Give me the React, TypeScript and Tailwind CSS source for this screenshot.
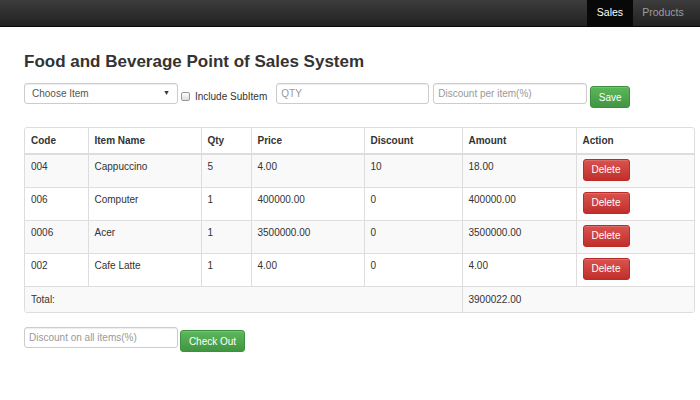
import React from 'react';

const rows = [
  { code: '004', name: 'Cappuccino', qty: '5', price: '4.00', discount: '10', amount: '18.00' },
  { code: '006', name: 'Computer', qty: '1', price: '400000.00', discount: '0', amount: '400000.00' },
  { code: '0006', name: 'Acer', qty: '1', price: '3500000.00', discount: '0', amount: '3500000.00' },
  { code: '002', name: 'Cafe Latte', qty: '1', price: '4.00', discount: '0', amount: '4.00' },
];

function DeleteButton() {
  return (
    <button className="h-[22px] w-[47px] rounded-[3px] border border-[#b92c28] bg-gradient-to-b from-[#d9534f] to-[#c12e2a] text-[10px] text-white shadow-[inset_0_1px_0_rgba(255,255,255,0.15)]">
      Delete
    </button>
  );
}

function GreenButton({ label, className }: { label: string; className: string }) {
  return (
    <button
      className={`h-[22px] rounded-[3px] border border-[#3e8f3e] bg-gradient-to-b from-[#5cb85c] to-[#419641] text-[10px] text-white shadow-[inset_0_1px_0_rgba(255,255,255,0.15)] ${className}`}
    >
      {label}
    </button>
  );
}

export default function App() {
  return (
    <div className="min-h-[400px] w-[700px] bg-white font-['Liberation_Sans',Arial,sans-serif] text-[10px] text-[#333]">
      {/* Navbar */}
      <nav className="flex h-[27px] justify-end border-b border-[#080808] bg-gradient-to-b from-[#3c3c3c] to-[#222]">
        <div className="flex pr-[7px]">
          <a className="flex w-[46px] items-center justify-center bg-[#080808] text-[10.5px] text-white">Sales</a>
          <a className="flex w-[60px] items-center justify-center text-[10.5px] text-[#9d9d9d]">Products</a>
        </div>
      </nav>

      <div className="px-[24px] pr-[5px]">
        <h3 className="mt-[24px] text-[17px] font-bold leading-[22px] text-[#333]">
          Food and Beverage Point of Sales System
        </h3>

        {/* Form row */}
        <div className="mt-[10px] flex items-start">
          <div className="flex h-[21px] w-[154px] items-center justify-between rounded-[3px] border border-[#ccc] px-[7px] shadow-[inset_0_1px_1px_rgba(0,0,0,0.075)]">
            <span className="text-[#555]">Choose Item</span>
            <span className="text-[7px] text-[#333]">▼</span>
          </div>
          <div className="ml-[3px] mt-[9px] h-[9px] w-[9px] rounded-[2px] border border-[#999] bg-gradient-to-b from-white to-[#ddd]" />
          <span className="ml-[5px] mt-[6px] text-[#333]">Include SubItem</span>
          <input
            className="ml-[9px] h-[21px] w-[153px] rounded-[3px] border border-[#ccc] px-[4px] text-[10px] placeholder-[#999] shadow-[inset_0_1px_1px_rgba(0,0,0,0.075)] outline-none"
            placeholder="QTY"
          />
          <input
            className="ml-[4px] h-[21px] w-[154px] rounded-[3px] border border-[#ccc] px-[4px] text-[10px] placeholder-[#999] shadow-[inset_0_1px_1px_rgba(0,0,0,0.075)] outline-none"
            placeholder="Discount per item(%)"
          />
          <GreenButton label="Save" className="ml-[3px] mt-[3px] w-[40px]" />
        </div>

        {/* Table */}
        <div className="mt-[19px] overflow-hidden rounded-[3px] border border-[#ddd]">
          <table className="w-full border-collapse text-left">
            <colgroup>
              <col className="w-[63px]" />
              <col className="w-[113px]" />
              <col className="w-[50px]" />
              <col className="w-[113px]" />
              <col className="w-[98px]" />
              <col className="w-[114px]" />
              <col />
            </colgroup>
            <thead>
              <tr className="h-[26px] border-b-2 border-[#ddd] font-bold text-[#333]">
                {['Code', 'Item Name', 'Qty', 'Price', 'Discount', 'Amount', 'Action'].map((h, i) => (
                  <th key={h} className={`px-[6px] align-middle ${i > 0 ? 'border-l border-[#ddd]' : ''}`}>
                    {h}
                  </th>
                ))}
              </tr>
            </thead>
            <tbody>
              {rows.map((r, idx) => (
                <tr key={r.code} className={`h-[33px] border-t border-[#ddd] leading-[14px] ${idx % 2 === 0 ? 'bg-[#f9f9f9]' : 'bg-white'}`}>
                  <td className="px-[6px] pt-[5px] align-top">{r.code}</td>
                  <td className="border-l border-[#ddd] px-[6px] pt-[5px] align-top">{r.name}</td>
                  <td className="border-l border-[#ddd] px-[6px] pt-[5px] align-top">{r.qty}</td>
                  <td className="border-l border-[#ddd] px-[6px] pt-[5px] align-top">{r.price}</td>
                  <td className="border-l border-[#ddd] px-[6px] pt-[5px] align-top">{r.discount}</td>
                  <td className="border-l border-[#ddd] px-[6px] pt-[5px] align-top">{r.amount}</td>
                  <td className="border-l border-[#ddd] px-[6px] pt-[4px] align-top">
                    <DeleteButton />
                  </td>
                </tr>
              ))}
              <tr className="h-[26px] border-t border-[#ddd] bg-[#f9f9f9]">
                <td colSpan={5} className="px-[6px] align-middle">Total:</td>
                <td colSpan={2} className="border-l border-[#ddd] px-[6px] align-middle">3900022.00</td>
              </tr>
            </tbody>
          </table>
        </div>

        {/* Checkout */}
        <div className="mt-[14px] flex items-start">
          <input
            className="h-[21px] w-[154px] rounded-[3px] border border-[#ccc] px-[4px] text-[10px] placeholder-[#999] shadow-[inset_0_1px_1px_rgba(0,0,0,0.075)] outline-none"
            placeholder="Discount on all items(%)"
          />
          <GreenButton label="Check Out" className="ml-[2px] mt-[3px] w-[65px]" />
        </div>
      </div>
    </div>
  );
}
